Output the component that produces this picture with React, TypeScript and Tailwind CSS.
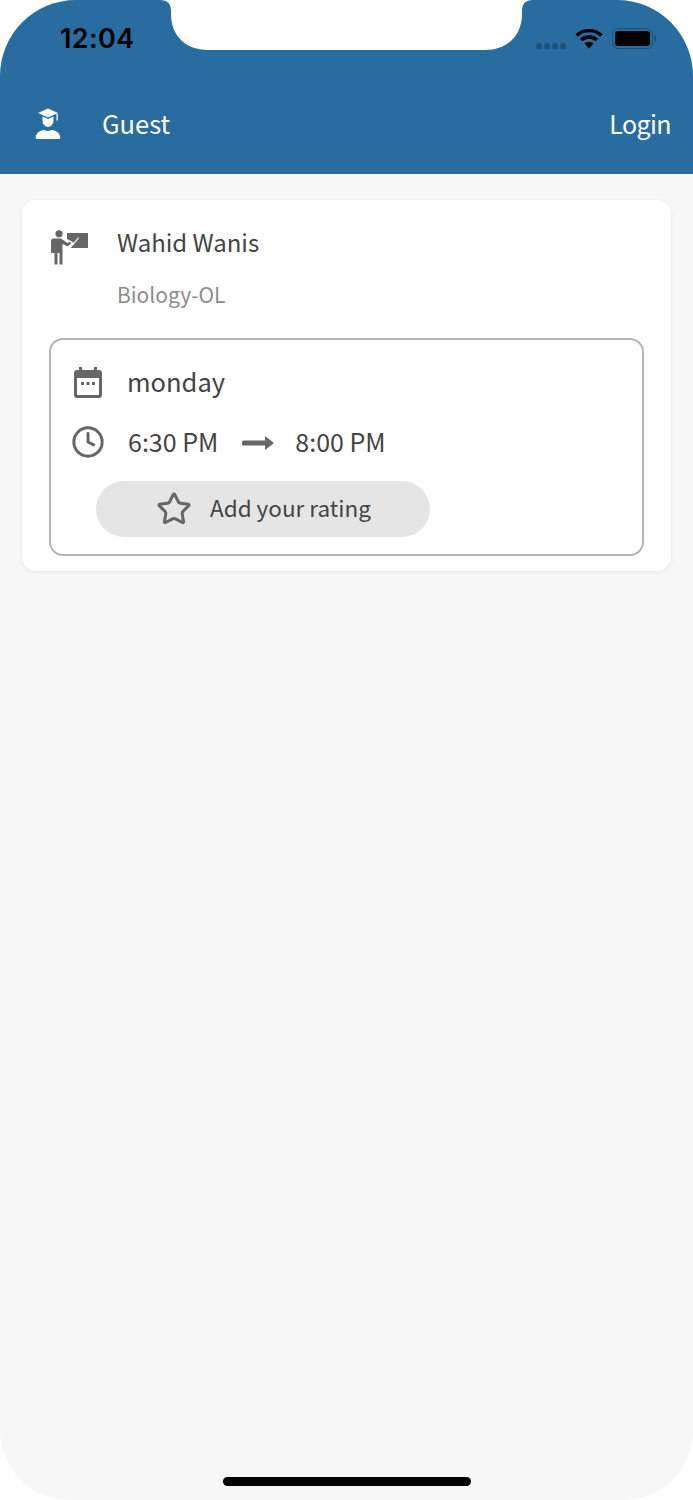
import { Clock, Star } from "lucide-react"

const sans = "font-['Noto_Sans_CJK_SC','Source_Sans_Pro',sans-serif]"

function GuestIcon() {
  return (
    <svg width="26" height="32" viewBox="0 0 26 32" fill="#fff">
      <path d="M13 0.5 L23 5 L13 9.5 L3 5 Z" />
      <path d="M7.5 8.5 L13 11 L18.5 8.5 V12.5 A5.5 6.5 0 0 1 7.5 12.5 Z" />
      <rect x="21.5" y="5.5" width="1.3" height="7" />
      <path d="M1 31 C-0.5 26 5 22 9.5 22 C11 23.2 15 23.2 16.5 22 C21 22 26.5 26 25 31 Z" />
    </svg>
  )
}

function TeacherIcon() {
  return (
    <svg width="37" height="35" viewBox="0 0 37 35" fill="#666">
      <circle cx="8" cy="3.8" r="3.6" />
      <path d="M0 10.5 A2.5 2.5 0 0 1 2.5 8.5 H10 L16.5 13 L19 11.5 L20 13.5 L16.5 16.5 L11.5 14 V34.5 H8.5 V23 H6.5 V34.5 H3.5 V23 H0 Z" />
      <path d="M16 3 H37 V18 H19.5 L24 13 L28 17 L20 11 L16 9 Z" />
      <path d="M22.5 13.5 L25 11 M25 11 L27.5 7.5" stroke="#fff" strokeWidth="1.2" fill="none" />
    </svg>
  )
}

function CalendarIcon() {
  return (
    <svg width="30" height="32" viewBox="0 0 30 32" fill="#666">
      <path fillRule="evenodd" d="M6 0 H9 V3 H21 V0 H24 V3 H26 A3 3 0 0 1 29 6 V28 A3 3 0 0 1 26 31 H4 A3 3 0 0 1 1 28 V6 A3 3 0 0 1 4 3 H6 Z M4 11 V27 A1 1 0 0 0 5 28 H25 A1 1 0 0 0 26 27 V11 Z" />
      <rect x="8" y="15" width="3" height="3" />
      <rect x="13.5" y="15" width="3" height="3" />
      <rect x="19" y="15" width="3" height="3" />
    </svg>
  )
}

function ArrowIcon() {
  return (
    <svg width="32" height="16" viewBox="0 0 32 16" fill="#666">
      <rect x="0" y="5.5" width="25" height="5" rx="1.5" />
      <path d="M23 1 L32 8 L23 15 Z" />
    </svg>
  )
}

function Notch() {
  return (
    <svg className="absolute left-[160px] top-0" width="373" height="51" viewBox="0 0 373 51" fill="#fff">
      <path d="M0 0 C8 0 11 4 11 11 V14 C11 36 26 50 48 50 H325 C347 50 362 36 362 14 V11 C362 4 365 0 373 0 Z" />
    </svg>
  )
}

function StatusBar() {
  return (
    <div className="flex h-[76px] items-start justify-between pl-[60px] pr-[37px] pt-[22px]">
      <span className="font-['Inter',sans-serif] text-[27px] font-semibold leading-[34px] tracking-[0.4px] text-black">12:04</span>
      <div className="flex items-center pt-[6px]">
        <div className="mr-[9px] mt-[14px] flex gap-[2px]">
          <span className="size-[6px] rounded-full bg-[#1d5177]" />
          <span className="size-[6px] rounded-full bg-[#1d5177]" />
          <span className="size-[6px] rounded-full bg-[#1d5177]" />
          <span className="size-[6px] rounded-full bg-[#1d5177]" />
        </div>
        <svg width="28" height="21" viewBox="0 0 28 21" fill="none" stroke="#000" strokeWidth="3.4">
          <path d="M1.5 7.5 C8.5 1 19.5 1 26.5 7.5" />
          <path d="M6 12 C10.5 8 17.5 8 22 12" />
          <path d="M14 20.5 L9.5 15.5 C12 13.6 16 13.6 18.5 15.5 Z" fill="#000" stroke="none" />
        </svg>
        <div className="ml-[9px] flex items-center">
          <div className="h-[21px] w-[41px] rounded-[6px] border-[1.5px] border-[#1d5177] p-[2px]">
            <div className="h-full w-full rounded-[3px] bg-black" />
          </div>
          <div className="ml-[1px] h-[7px] w-[2px] rounded-r bg-[#1d5177]" />
        </div>
      </div>
    </div>
  )
}

export default function App() {
  return (
    <div className={`relative flex h-[1500px] w-[693px] flex-col bg-white ${sans}`}>
      <header className="h-[174px] rounded-t-[76px] bg-[#286ca0]">
        <StatusBar />
        <div className="flex h-[96px] items-center justify-between pl-[35px] pr-[22px]">
          <div className="flex items-center">
            <div className="-mt-[1px]"><GuestIcon /></div>
            <span className="ml-[41px] -mt-[2px] text-[25.5px] leading-[36px] text-white">Guest</span>
          </div>
          <span className="-mt-[2px] text-[25px] leading-[36px] tracking-[-0.6px] text-white">Login</span>
        </div>
      </header>
      <Notch />

      <main className="flex flex-1 flex-col items-center rounded-b-[70px] bg-[#f7f7f7] pt-[26px]">
        <section className="h-[371px] w-[649px] rounded-[14px] bg-white px-[27px] pt-[24px] shadow-[0_1px_4px_rgba(0,0,0,0.07)]">
          <div className="flex">
            <div className="ml-[2px] mt-[6px] w-[66px] shrink-0">
              <TeacherIcon />
            </div>
            <div>
              <div className="text-[24px] leading-[36px] text-[#444]">Wahid Wanis</div>
              <div className="mt-[16px] text-[21px] leading-[36px] text-[#8c8c8c]">Biology-OL</div>
            </div>
          </div>

          <div className="mt-[26px] h-[218px] rounded-[14px] border-2 border-[#b4b4b4] px-[22px] pt-[25px]">
            <div className="flex h-[36px] items-center">
              <CalendarIcon />
              <span className="ml-[24px] -mt-[4px] text-[25.5px] leading-[36px] text-[#444]">monday</span>
            </div>
            <div className="mt-[23px] flex h-[36px] items-center">
              <Clock size={34} color="#666" strokeWidth={2.1} className="-ml-[2px]" />
              <span className="ml-[23px] -mt-[2px] text-[25px] leading-[36px] text-[#444]">6:30 PM</span>
              <span className="ml-[24px] mt-[2px]"><ArrowIcon /></span>
              <span className="ml-[21px] -mt-[2px] text-[25px] leading-[36px] text-[#444]">8:00 PM</span>
            </div>
            <div className="ml-[23px] mt-[21px] flex h-[56px] w-[334px] items-center rounded-full bg-[#e5e5e5] pl-[60px]">
              <Star size={36} color="#666" strokeWidth={2} strokeLinejoin="miter" />
              <span className="ml-[18px] -mt-[4px] text-[22.5px] leading-[36px] text-[#444]">Add your rating</span>
            </div>
          </div>
        </section>

        <div className="mb-[14px] mt-auto h-[9px] w-[248px] rounded-full bg-black" />
      </main>
    </div>
  )
}
